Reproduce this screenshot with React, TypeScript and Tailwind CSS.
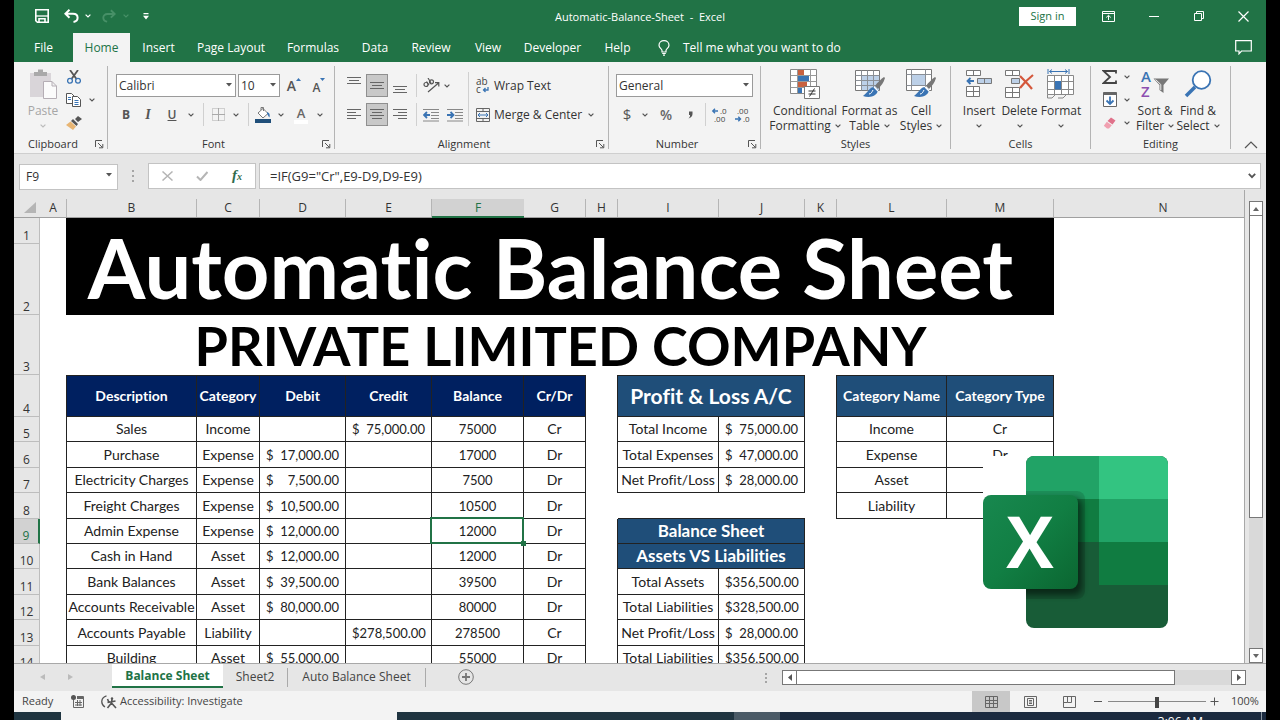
import React from "react";

type Kids = { children?: React.ReactNode };

const Chevron = ({ color = "#555" }: { color?: string }) => (
  <svg width="6" height="4" viewBox="0 0 6 4" fill="none" stroke={color} strokeWidth="1.2">
    <path d="M0.6 0.6 L3 3 L5.4 0.6" />
  </svg>
);

const Arrow = () => (
  <svg width="6" height="4" viewBox="0 0 6 4" fill="#555">
    <path d="M0 0 H6 L3 3.6 Z" />
  </svg>
);

const Tool = ({ label, className, children }: { label: string; className: string } & Kids) => (
  <button aria-label={label} className={`flex h-[23px] shrink-0 items-center justify-center ${className}`}>
    {children}
  </button>
);

const Sep = ({ className }: { className: string }) => (
  <div className={`flex h-[23px] shrink-0 justify-center ${className}`}>
    <div className="w-px bg-[#d0d0d0]" />
  </div>
);

const Launcher = () => (
  <svg width="9" height="9" viewBox="0 0 9 9" fill="none" stroke="#555">
    <path d="M0.5 7 V0.5 H7" />
    <path d="M3 3 L7.5 7.5 M7.8 4 V7.8 H4" />
  </svg>
);

const Group = ({ name, className, launcher, children }: { name: string; className: string; launcher?: boolean } & Kids) => (
  <>
    <section aria-label={name} className={`flex shrink-0 flex-col ${className}`}>
      <div className="h-[74px]">{children}</div>
      <div className="flex h-[17px] items-center text-[11px]">
        <span className="flex-1 text-center">{name}</span>
        {launcher && (
          <button aria-label={`${name} settings`} className="flex w-[15px] items-center justify-center">
            <Launcher />
          </button>
        )}
      </div>
    </section>
    <div className="mt-1 h-[83px] w-px shrink-0 bg-[#b4b4b4]" />
  </>
);

const Picker = ({ label, value, className }: { label: string; value: string; className: string }) => (
  <div className={`relative h-[23px] shrink-0 ${className}`}>
    <select aria-label={label} className="h-full w-full appearance-none border border-[#9a9a9a] bg-white pl-[2px] text-[#333]">
      <option>{value}</option>
    </select>
    <span className="pointer-events-none absolute top-[9px] right-1">
      <Arrow />
    </span>
  </div>
);

const Big = ({ lines, className, disabled, children }: { lines: string[]; className: string; disabled?: boolean } & Kids) => (
  <button disabled={disabled} className={`flex shrink-0 flex-col items-center pt-2 leading-[15px] whitespace-nowrap ${disabled ? "text-[#a6a6a6]" : ""} ${className}`}>
    <span className="mb-[5px] flex h-7 items-center">{children}</span>
    <span>{lines[0]}</span>
    <span className="flex h-[15px] items-center gap-1">
      {lines[1]}
      <Chevron color={disabled ? "#bbb" : "#555"} />
    </span>
  </button>
);

const Lines = ({ rows, y }: { rows: [number, number][]; y: number }) => (
  <svg width="14" height="22" viewBox="0 0 14 22" stroke="#666">
    {rows.map(([a, b], i) => (
      <path key={i} d={`M${a} ${y + i * 3}.5 H${b}`} />
    ))}
  </svg>
);

const Indent = ({ out }: { out?: boolean }) => (
  <svg width="16" height="14" viewBox="0 0 16 14" fill="none">
    <path d="M0 1.5 H16 M8 4.5 H16 M8 7.5 H16 M8 10.5 H16 M0 13 H16" stroke="#888" />
    <path d={out ? "M7 7 H1.5 M4 4 L1 7 L4 10" : "M0 7 H5.5 M3.5 4 L6.5 7 L3.5 10"} stroke="#3a74b4" strokeWidth="1.8" />
  </svg>
);

const Brush = () => (
  <g>
    <path d="M29 8 C26 10 22 14 20 17 L23 20 C26 17 29 13 30 9 Z" fill="#777" />
    <path d="M19 18 C15 18 13 23 8 27 C14 29 22 28 23 21 Z" fill="#3a74b4" />
    <path d="M14 25 C16 25 17 23 18 21" stroke="#fff" strokeWidth="1" fill="none" />
    <path d="M19 18 L23 22" stroke="#fff" strokeWidth="1.2" />
  </g>
);

function TitleBar() {
  return (
    <header className="flex h-8 items-center text-[11px] text-white">
      <div className="flex flex-1 items-center">
        <button aria-label="Save" className="ml-[20px] flex w-4 justify-center">
          <svg width="14" height="14" viewBox="0 0 14 14" fill="none" stroke="#fff" strokeWidth="1.6">
            <path d="M0.8 0.8 H13.2 V13.2 H2.4 L0.8 11.6 Z" />
            <path d="M0.8 7 H13.2" strokeWidth="1.3" />
            <path d="M4 13 V9.8 H10 V13" />
          </svg>
        </button>
        <button aria-label="Undo" className="ml-[13px] flex w-4 justify-center">
          <svg width="15" height="14" viewBox="0 0 15 14" fill="none" stroke="#fff" strokeWidth="2">
            <path d="M5.5 0.8 L1.4 4.8 L5.5 8.8 M2 4.8 H9 C12 4.8 13.6 6.7 13.6 8.8 C13.6 11 12 12.6 9.5 13" />
          </svg>
        </button>
        <button aria-label="Undo history" className="ml-[3px] flex w-3 justify-center">
          <Chevron color="#fff" />
        </button>
        <button aria-label="Redo" className="ml-[7px] flex w-4 justify-center opacity-30">
          <svg width="14" height="14" viewBox="0 0 15 14" fill="none" stroke="#9fd3b4" strokeWidth="2">
            <path d="M9.5 0.8 L13.6 4.8 L9.5 8.8 M13 4.8 H6 C3 4.8 1.4 6.7 1.4 8.8 C1.4 11 3 12.6 5.5 13" />
          </svg>
        </button>
        <button aria-label="Redo history" className="ml-[3px] flex w-3 justify-center opacity-30">
          <Chevron color="#9fd3b4" />
        </button>
        <button aria-label="Customize toolbar" className="ml-[8px] flex w-3 justify-center">
          <svg width="6" height="7" viewBox="0 0 6 7" fill="#fff">
            <path d="M0.5 0 H5.5 V1.2 H0.5 Z M0 2.8 H6 L3 6.4 Z" />
          </svg>
        </button>
      </div>
      <h1 className="pt-[2px] whitespace-pre">Automatic-Balance-Sheet  -  Excel</h1>
      <div className="flex flex-1 items-center justify-end">
        <button className="mr-[10px] h-[19px] w-[57px] bg-white text-[#217346]">Sign in</button>
        <button aria-label="Ribbon display" className="flex w-[45px] justify-center">
          <svg width="13" height="11" viewBox="0 0 13 11" fill="none" stroke="#fff">
            <path d="M0.5 0.5 H12.5 V10.5 H0.5 Z M0.5 2.5 H12.5 M6.5 9 V4.5 M4.2 6.5 L6.5 4.3 L8.8 6.5" />
          </svg>
        </button>
        <button aria-label="Minimize" className="flex w-[45px] justify-center">
          <span className="h-px w-[10px] bg-white" />
        </button>
        <button aria-label="Restore" className="flex w-[45px] justify-center">
          <svg width="10" height="10" viewBox="0 0 10 10" fill="none" stroke="#fff">
            <path d="M0.5 2.5 H7.5 V9.5 H0.5 Z M2.5 2.5 V0.5 H9.5 V7.5 H7.5" />
          </svg>
        </button>
        <button aria-label="Close" className="flex w-[45px] justify-center">
          <svg width="11" height="11" viewBox="0 0 11 11" stroke="#fff" strokeWidth="1.2">
            <path d="M0.5 0.5 L10.5 10.5 M10.5 0.5 L0.5 10.5" />
          </svg>
        </button>
      </div>
    </header>
  );
}

const MENU: [string, string][] = [
  ["File", "w-[59px]"],
  ["Home", "w-[57px]"],
  ["Insert", "w-[57px]"],
  ["Page Layout", "w-[88px]"],
  ["Formulas", "w-[76px]"],
  ["Data", "w-[48px]"],
  ["Review", "w-[64px]"],
  ["View", "w-[50px]"],
  ["Developer", "w-[79px]"],
  ["Help", "w-[51px]"],
];

function MenuTabs() {
  return (
    <nav className="flex h-[30px] items-end text-[12px] text-white">
      {MENU.map(([name, w]) => (
        <button key={name} className={`h-[29px] shrink-0 whitespace-nowrap ${w} ${name === "Home" ? "bg-[#f3f3f3] text-[#217346]" : ""}`}>
          {name}
        </button>
      ))}
      <button className="ml-[15px] flex h-[29px] items-center gap-[13px] whitespace-nowrap">
        <svg width="12" height="16" viewBox="0 0 12 16" fill="none" stroke="#fff" strokeWidth="1.2">
          <path d="M4 12 V10.5 C4 9 1 8 1 5.2 C1 2.6 3.2 0.7 6 0.7 C8.8 0.7 11 2.6 11 5.2 C11 8 8 9 8 10.5 V12 Z M4.2 13.5 H7.8 M5 15.2 H7" />
        </svg>
        Tell me what you want to do
      </button>
      <button aria-label="Comments" className="mr-[14px] ml-auto flex h-[29px] items-center">
        <svg width="17" height="15" viewBox="0 0 17 15" fill="none" stroke="#fff" strokeWidth="1.2">
          <path d="M0.7 0.7 H16.3 V11 H6.5 L4 13.8 V11 H0.7 Z" />
        </svg>
      </button>
    </nav>
  );
}

function Ribbon() {
  return (
    <div className="flex h-[92px] overflow-hidden border-b border-[#cfcfcf] bg-[#f3f3f3] text-[12px] text-[#333]">
      <Group name="Clipboard" className="w-[93px]" launcher>
        <div className="flex pl-[9px]">
          <Big lines={["Paste"]} className="w-10" disabled>
            <svg width="28" height="30" viewBox="0 0 28 30">
              <path d="M1 4 H22 V28 H1 Z" fill="#d9d5d9" />
              <path d="M5 7 V3 H9 V0.5 H14 V3 H18 V7 Z" fill="#a9a9a9" />
              <path d="M14.5 12.5 H23 L27.5 17 V29.5 H14.5 Z M23 12.5 V17 H27.5" fill="#fbfbfb" stroke="#b5aeb5" />
            </svg>
          </Big>
          <div className="flex flex-col pt-[3px]">
            <div className="flex">
              <Tool label="Cut" className="w-[21px]">
                <svg width="14" height="14" viewBox="0 0 14 14" fill="none">
                  <path d="M3 0 L9.5 9 M11 0 L4.5 9" stroke="#555" strokeWidth="1.8" />
                  <circle cx="3" cy="10.8" r="2.4" stroke="#3a74b4" strokeWidth="1.3" />
                  <circle cx="11" cy="10.8" r="2.4" stroke="#3a74b4" strokeWidth="1.3" />
                </svg>
              </Tool>
            </div>
            <div className="flex">
              <Tool label="Copy" className="w-[21px]">
                <svg width="15" height="14" viewBox="0 0 15 14" fill="#fff" stroke="#555">
                  <path d="M0.5 0.5 H5.5 L8.5 3.5 V10.5 H0.5 Z" />
                  <path d="M6.5 3.5 H11.5 L14.5 6.5 V13.5 H6.5 Z" />
                  <path d="M2 4.5 H5 M2 6.5 H5 M8.5 7.5 H12.5 M8.5 9.5 H12.5 M8.5 11.5 H12.5" stroke="#3a74b4" />
                </svg>
              </Tool>
              <Tool label="Copy options" className="w-[15px]">
                <Chevron />
              </Tool>
            </div>
            <Tool label="Format painter" className="w-[21px]">
              <svg width="16" height="14" viewBox="0 0 16 14">
                <path d="M12 0 L16 3 L12 6 L9 3 Z M7 3 L12 8 L10.5 10 L5 5 Z" fill="#555" />
                <path d="M4.5 5.5 L10 10.5 L7 14 L0 9 Z" fill="#e8b573" />
              </svg>
            </Tool>
          </div>
        </div>
      </Group>

      <Group name="Font" className="w-[226px]" launcher>
        <div className="flex flex-col gap-[6px] pt-3 pl-2">
          <div className="flex">
            <Picker label="Font" value="Calibri" className="mr-[2px] w-[120px]" />
            <Picker label="Font size" value="10" className="w-[42px]" />
            <Tool label="Increase font size" className="w-[28px] text-[14px] font-semibold text-[#555]">
              A
              <span className="-mt-3">
                <svg width="5" height="3" fill="#3a74b4"><path d="M0 3 H5 L2.5 0 Z" /></svg>
              </span>
            </Tool>
            <Tool label="Decrease font size" className="w-[22px] pt-1 font-semibold text-[#555]">
              A
              <span className="-mt-4">
                <svg width="5" height="3" fill="#3a74b4"><path d="M0 0 H5 L2.5 3 Z" /></svg>
              </span>
            </Tool>
          </div>
          <div className="flex">
            <Tool label="Bold" className="w-[20px] font-bold text-[#555]">B</Tool>
            <Tool label="Italic" className="w-[24px] font-['Liberation_Serif',serif] text-[14px] font-bold text-[#555] italic">I</Tool>
            <Tool label="Underline" className="w-[24px] font-semibold text-[#555] underline">U</Tool>
            <Tool label="Underline options" className="w-[14px]"><Chevron /></Tool>
            <Sep className="w-[10px]" />
            <Tool label="Borders" className="w-[20px]">
              <svg width="13" height="13" viewBox="0 0 13 13" fill="none" stroke="#aaa">
                <path d="M0.5 0.5 H12.5 V12.5 H0.5 Z" strokeDasharray="1 1" />
                <path d="M6.5 0 V13 M0 6.5 H13" />
              </svg>
            </Tool>
            <Tool label="Border options" className="w-[16px]"><Chevron /></Tool>
            <Sep className="w-2" />
            <Tool label="Fill color" className="w-[22px]">
              <svg width="16" height="16" viewBox="0 0 16 16" fill="none">
                <path d="M3 6 L8 1.5 L13 6.5 L8 11 Z" fill="#fff" stroke="#777" />
                <path d="M6 3 V0.5 H8.5 V4" stroke="#777" />
                <path d="M12 5 C15 6 15 8 14.5 10.5 C13 9 13 8 12 6.5 Z" fill="#3a74b4" />
                <path d="M0 12 H16 V16 H0 Z" fill="#1f4e79" />
              </svg>
            </Tool>
            <Tool label="Fill options" className="w-[14px]"><Chevron /></Tool>
            <Tool label="Font color" className="w-[26px]">
              <span className="border-b-4 border-white px-[3px] text-[13px] leading-[14px] font-semibold text-[#666]">A</span>
            </Tool>
            <Tool label="Font color options" className="w-3"><Chevron /></Tool>
          </div>
        </div>
      </Group>

      <Group name="Alignment" className="w-[273px]" launcher>
        <div className="flex">
          <div className="flex flex-col gap-[6px] pt-3 pl-[7px]">
            <div className="flex">
              <Tool label="Top align" className="w-6"><Lines y={2} rows={[[0, 14], [2, 12], [0, 14]]} /></Tool>
              <Tool label="Middle align" className="w-[22px] border border-[#8f8f8f] bg-[#c8c8c8]"><Lines y={7} rows={[[0, 14], [2, 12], [0, 14]]} /></Tool>
              <Tool label="Bottom align" className="w-6"><Lines y={11} rows={[[0, 14], [2, 12], [0, 14]]} /></Tool>
              <Sep className="w-2" />
              <Tool label="Orientation" className="w-[22px]">
                <svg width="17" height="15" viewBox="0 0 17 15" fill="none" stroke="#555" strokeWidth="1.2">
                  <circle cx="3" cy="6.5" r="2" />
                  <path d="M3.5 3.5 L6 7" />
                  <circle cx="8.5" cy="3.8" r="2" />
                  <path d="M5 0 L8 5" />
                  <path d="M5 14 L15.5 5 M12 4.7 H15.8 V8.5" />
                </svg>
              </Tool>
              <Tool label="Orientation options" className="w-[10px]"><Chevron /></Tool>
            </div>
            <div className="flex">
              <Tool label="Align left" className="w-6"><Lines y={5} rows={[[0, 14], [0, 9], [0, 14], [0, 9]]} /></Tool>
              <Tool label="Center" className="w-[22px] border border-[#8f8f8f] bg-[#c8c8c8]"><Lines y={5} rows={[[0, 14], [2, 12], [0, 14], [2, 12]]} /></Tool>
              <Tool label="Align right" className="w-6"><Lines y={5} rows={[[0, 14], [5, 14], [0, 14], [5, 14]]} /></Tool>
              <Sep className="w-2" />
              <Tool label="Decrease indent" className="w-[22px]"><Indent out /></Tool>
              <Tool label="Increase indent" className="w-[26px]"><Indent /></Tool>
            </div>
          </div>
          <div className="mt-[10px] h-[54px] w-px bg-[#d0d0d0]" />
          <div className="flex flex-col gap-[6px] pt-3 pl-[7px]">
            <button className="flex h-[23px] items-center gap-1 whitespace-nowrap">
              <svg className="overflow-visible" width="14" height="16" viewBox="0 0 14 16" fill="none">
                <text x="0" y="7" fontSize="10" fill="#444">ab</text>
                <text x="0" y="15" fontSize="10" fill="#444">c</text>
                <path d="M12 9 V12 H7.5 M9.5 10 L7.5 12 L9.5 14" stroke="#3a74b4" strokeWidth="1.3" />
              </svg>
              Wrap Text
            </button>
            <div className="flex">
              <button className="flex h-[23px] items-center gap-1 whitespace-nowrap">
                <svg width="14" height="14" viewBox="0 0 14 14" fill="none" stroke="#666">
                  <path d="M0.5 0.5 H13.5 V13.5 H0.5 Z M0.5 3.5 H13.5 M0.5 10.5 H13.5 M7 0.5 V3.5 M7 10.5 V13.5" />
                  <path d="M2 7 H12 M4 5 L2 7 L4 9 M10 5 L12 7 L10 9" stroke="#3a74b4" />
                </svg>
                Merge &amp; Center
              </button>
              <Tool label="Merge options" className="w-[18px]"><Chevron /></Tool>
            </div>
          </div>
        </div>
      </Group>

      <Group name="Number" className="w-[151px]" launcher>
        <div className="flex flex-col gap-[6px] pt-3 pl-[7px]">
          <Picker label="Number format" value="General" className="w-[137px]" />
          <div className="flex">
            <Tool label="Currency" className="w-[22px] text-[15px] text-[#555]">$</Tool>
            <Tool label="Currency options" className="w-[14px]"><Chevron /></Tool>
            <Tool label="Percent" className="w-[28px] text-[14px] font-semibold text-[#666]">%</Tool>
            <Tool label="Comma style" className="w-[20px]">
              <svg width="5" height="8" viewBox="0 0 5 8" fill="#555"><path d="M1 0.5 H4.5 V3 C4.5 5 3 7 0.5 7.5 C2 6 2.2 5 2 4 H1 Z" /></svg>
            </Tool>
            <Sep className="w-[10px]" />
            <Tool label="Increase decimal" className="w-[18px]">
              <svg className="overflow-visible" width="15" height="14" viewBox="0 0 15 14" fill="#444" fontSize="8">
                <text x="8" y="6">.0</text>
                <text x="2" y="14">.00</text>
                <path d="M6 3 H0.8 M3 0.8 L0.8 3 L3 5.2" fill="none" stroke="#3a74b4" strokeWidth="1.4" />
              </svg>
            </Tool>
            <Tool label="Decrease decimal" className="ml-1 w-[20px]">
              <svg className="overflow-visible" width="15" height="14" viewBox="0 0 15 14" fill="#444" fontSize="8">
                <text x="2" y="6">.00</text>
                <text x="8" y="14">.0</text>
                <path d="M0 11 H5.5 M3.3 8.8 L5.5 11 L3.3 13.2" fill="none" stroke="#3a74b4" strokeWidth="1.4" />
              </svg>
            </Tool>
          </div>
        </div>
      </Group>

      <Group name="Styles" className="w-[189px]">
        <div className="flex pl-[10px]">
          <Big lines={["Conditional", "Formatting"]} className="w-[68px]">
            <svg width="30" height="30" viewBox="0 0 30 30">
              <path d="M0.5 0.5 H26.5 V24.5 H0.5 Z" fill="#fff" stroke="#888" />
              <path d="M0.5 6.5 H26.5 M0.5 12.5 H26.5 M0.5 18.5 H26.5 M7.5 0.5 V24.5 M20.5 0.5 V24.5" stroke="#999" />
              <path d="M8 1 H14 V6 H8 Z M8 13 H17 V18 H8 Z" fill="#c8613f" />
              <path d="M8 7 H19 V12 H8 Z M8 19 H12 V24 H8 Z" fill="#3a74b4" />
              <path d="M14.5 17.5 H29.5 V29.5 H14.5 Z" fill="#fff" stroke="#777" />
              <path d="M18.5 22 H25.5 M18.5 25 H25.5 M24.5 19.5 L19.5 27.5" stroke="#333" />
            </svg>
          </Big>
          <Big lines={["Format as", "Table"]} className="w-[61px]">
            <svg width="30" height="30" viewBox="0 0 30 30">
              <path d="M0.5 1.5 H24.5 V21.5 H0.5 Z" fill="#fff" stroke="#777" />
              <path d="M6 7 H24 V21 H6 Z" fill="#bcd0e8" />
              <path d="M0.5 6.5 H24.5 M0.5 11.5 H24.5 M0.5 16.5 H24.5 M6.5 1.5 V21.5 M12.5 1.5 V21.5 M18.5 1.5 V21.5" stroke="#8a8f96" />
              <Brush />
            </svg>
          </Big>
          <Big lines={["Cell", "Styles"]} className="w-[42px]">
            <svg width="30" height="30" viewBox="0 0 30 30">
              <path d="M0.5 0.5 H25.5 V21.5 H0.5 Z" fill="#fff" stroke="#777" />
              <path d="M0.5 5.5 H25.5 M0.5 16.5 H25.5 M5.5 0.5 V21.5 M19.5 0.5 V21.5" stroke="#8a8f96" />
              <path d="M6 6 H19 V16 H6 Z" fill="#bcd0e8" />
              <Brush />
            </svg>
          </Big>
        </div>
      </Group>

      <Group name="Cells" className="w-[139px]">
        <div className="flex pl-2">
          <Big lines={["Insert"]} className="w-10">
            <svg width="26" height="28" viewBox="0 0 26 28" fill="#fff" stroke="#777">
              <path d="M0.5 0.5 H14.5 V5.5 H0.5 Z M7.5 0.5 V5.5" />
              <path d="M11.5 8.5 H25.5 V13.5 H11.5 Z M18.5 8.5 V13.5" fill="#bcd0e8" />
              <path d="M0.5 16.5 H13.5 V26.5 H0.5 Z M7.5 16.5 V26.5 M0.5 21.5 H13.5" />
              <path d="M8 11 H1.5 M4.5 8 L1.5 11 L4.5 14" fill="none" stroke="#3a74b4" strokeWidth="1.8" />
            </svg>
          </Big>
          <Big lines={["Delete"]} className="w-[41px]">
            <svg width="29" height="28" viewBox="0 0 29 28" fill="#fff" stroke="#777">
              <path d="M0.5 0.5 H14.5 V5.5 H0.5 Z M7.5 0.5 V5.5" />
              <path d="M6.5 8.5 H14.5 V13.5 H6.5 Z" fill="#bcd0e8" />
              <path d="M0.5 17.5 H14.5 V27.5 H0.5 Z M7.5 17.5 V27.5 M0.5 22.5 H14.5" />
              <path d="M15 6 C19 10 23 14 27 19 M28 5 C23 9 18 14 15 18" fill="none" stroke="#d4573b" strokeWidth="2.2" />
            </svg>
          </Big>
          <Big lines={["Format"]} className="w-[42px]">
            <svg width="28" height="30" viewBox="0 0 28 30" fill="none" stroke="#888">
              <path d="M1 0 V5 M22 0 V5 M2.5 2.5 H20.5 M5 0.5 L2.5 2.5 L5 4.5 M18 0.5 L20.5 2.5 L18 4.5" stroke="#3a74b4" />
              <path d="M0.5 6.5 H26.5 V25.5 H0.5 Z" fill="#fff" />
              <path d="M0.5 12.5 H26.5 M0.5 20.5 H26.5 M7.5 6.5 V25.5 M14.5 6.5 V25.5 M21.5 6.5 V25.5" />
              <path d="M8 12 H14 V20.5 H8 Z" fill="#3a74b4" stroke="none" />
              <path d="M0.5 25.5 V29 H5 L8 26 M11 29 H16 L19 26" />
            </svg>
          </Big>
        </div>
      </Group>

      <Group name="Editing" className="w-[139px]">
        <div className="flex pl-2">
          <div className="flex w-[34px] flex-col pt-[3px]">
            <div className="flex">
              <Tool label="Sum" className="w-[21px]">
                <svg width="15" height="14" viewBox="0 0 15 14" fill="none" stroke="#444" strokeWidth="1.8">
                  <path d="M14 3.5 V1 H1.5 L8 7 L1.5 13 H14 V10.5" />
                </svg>
              </Tool>
              <Tool label="Sum options" className="w-[13px]"><Chevron /></Tool>
            </div>
            <div className="flex">
              <Tool label="Fill" className="w-[21px]">
                <svg width="14" height="15" viewBox="0 0 14 15" fill="none">
                  <path d="M0.5 0.5 H13.5 V14.5 H0.5 Z" fill="#fff" stroke="#666" />
                  <path d="M0.5 0.5 H13.5 V3 H0.5 Z" fill="#666" />
                  <path d="M7 4.5 V12 M3.5 8.5 L7 12 L10.5 8.5" stroke="#3a74b4" strokeWidth="1.8" />
                </svg>
              </Tool>
              <Tool label="Fill options" className="w-[13px]"><Chevron /></Tool>
            </div>
            <div className="flex">
              <Tool label="Clear" className="w-[21px]">
                <svg width="13" height="12" viewBox="0 0 13 12">
                  <path d="M8 0.5 L12.5 3.5 L9.5 7.5 L4.5 4 Z" fill="#e0718a" />
                  <path d="M3.8 4.8 L8.8 8.3 L6 11.5 H4 L0.8 8.8 Z" fill="#f0a0b0" />
                </svg>
              </Tool>
              <Tool label="Clear options" className="w-[13px]"><Chevron /></Tool>
            </div>
          </div>
          <Big lines={["Sort &", "Filter"]} className="w-11">
            <svg className="overflow-visible" width="29" height="28" viewBox="0 0 29 28">
              <text x="0" y="12" fontSize="15" fontWeight="600" fill="#3a74b4">A</text>
              <text x="0" y="27" fontSize="15" fontWeight="600" fill="#8d4fb0">Z</text>
              <path d="M12.5 8.5 H28 L22.5 15 V23 L18.5 20 V15 Z" fill="#777" />
              <path d="M19.8 14.5 V20 M14.5 9.5 L19.8 14.5" stroke="#eee" />
            </svg>
          </Big>
          <Big lines={["Find &", "Select"]} className="w-[42px]">
            <svg width="28" height="28" viewBox="0 0 28 28" fill="none" stroke="#3a74b4">
              <circle cx="17.5" cy="10" r="8.8" fill="#fff" strokeWidth="1.8" />
              <path d="M11 17 L2 26" strokeWidth="3.6" />
            </svg>
          </Big>
        </div>
      </Group>
      <button aria-label="Collapse ribbon" className="mr-2 mb-[4px] ml-auto self-end">
        <svg width="14" height="9" viewBox="0 0 14 9" fill="none" stroke="#555" strokeWidth="1.2">
          <path d="M1 8 L7 2 L13 8" />
        </svg>
      </button>
    </div>
  );
}

function FormulaBar() {
  return (
    <div className="flex h-9 items-center pt-[8px] pr-[5px] pl-[5px] text-[#333]">
      <div className="relative h-[26px] w-[99px] shrink-0">
        <input aria-label="Name box" defaultValue="F9" className="h-full w-full border border-[#c3c3c3] bg-white pl-[6px] text-[12px]" />
        <span className="pointer-events-none absolute top-[10px] right-[6px]">
          <Arrow />
        </span>
      </div>
      <div className="flex w-[30px] shrink-0 flex-col items-center gap-[3px]">
        <i className="size-[2px] bg-[#a5a5a5]" />
        <i className="size-[2px] bg-[#a5a5a5]" />
        <i className="size-[2px] bg-[#a5a5a5]" />
      </div>
      <div className="flex h-[26px] w-[108px] shrink-0 items-center border border-[#c3c3c3] bg-white">
        <button aria-label="Cancel" className="flex w-9 justify-center">
          <svg width="11" height="10" viewBox="0 0 11 10" stroke="#b5b5b5" strokeWidth="1.5"><path d="M0.5 0.5 L10.5 9.5 M10.5 0.5 L0.5 9.5" /></svg>
        </button>
        <button aria-label="Enter" className="flex w-[34px] justify-center">
          <svg width="12" height="10" viewBox="0 0 12 10" fill="none" stroke="#b5b5b5" strokeWidth="2"><path d="M1 5.5 L4.5 9 L11.5 1" /></svg>
        </button>
        <button aria-label="Insert function" className="w-[36px] font-['Liberation_Serif',serif] text-[15px] leading-4 font-bold text-[#2f6b4c] italic">
          f<span className="text-[10px]">x</span>
        </button>
      </div>
      <div className="relative ml-[3px] h-[26px] flex-1">
        <input aria-label="Formula" defaultValue={'=IF(G9="Cr",E9-D9,D9-E9)'} className="h-full w-full border border-[#c3c3c3] bg-white pl-[10px] text-[13px]" />
        <span className="pointer-events-none absolute top-[10px] right-[5px]">
          <svg width="8" height="6" viewBox="0 0 8 6" fill="none" stroke="#555" strokeWidth="1.8"><path d="M0.8 0.8 L4 4.2 L7.2 0.8" /></svg>
        </span>
      </div>
    </div>
  );
}

const COLS: [string, string][] = [
  ["A", "w-[27px]"],
  ["B", "w-[130px]"],
  ["C", "w-[63px]"],
  ["D", "w-[86px]"],
  ["E", "w-[86px]"],
  ["F", "w-[92px]"],
  ["G", "w-[62px]"],
  ["H", "w-[32px]"],
  ["I", "w-[101px]"],
  ["J", "w-[86px]"],
  ["K", "w-[32px]"],
  ["L", "w-[110px]"],
  ["M", "w-[107px]"],
  ["N", ""],
];

type Entry = {
  h: string;
  main: [string, string, string, string, string, string];
  side?: [string, string];
  banner?: string;
  kind?: [string, string];
};

const ENTRIES: Entry[] = [
  { h: "h-[25px]", main: ["Sales", "Income", "", "75,000.00", "75000", "Cr"], side: ["Total Income", "75,000.00"], kind: ["Income", "Cr"] },
  { h: "h-[26px]", main: ["Purchase", "Expense", "17,000.00", "", "17000", "Dr"], side: ["Total Expenses", "47,000.00"], kind: ["Expense", "Dr"] },
  { h: "h-[25px]", main: ["Electricity Charges", "Expense", "7,500.00", "", "7500", "Dr"], side: ["Net Profit/Loss", "28,000.00"], kind: ["Asset", "Dr"] },
  { h: "h-[26px]", main: ["Freight Charges", "Expense", "10,500.00", "", "10500", "Dr"], kind: ["Liability", "Cr"] },
  { h: "h-[25px]", main: ["Admin Expense", "Expense", "12,000.00", "", "12000", "Dr"], banner: "Balance Sheet" },
  { h: "h-[25px]", main: ["Cash in Hand", "Asset", "12,000.00", "", "12000", "Dr"], banner: "Assets VS Liabilities" },
  { h: "h-[26px]", main: ["Bank Balances", "Asset", "39,500.00", "", "39500", "Dr"], side: ["Total Assets", "356,500.00"] },
  { h: "h-[25px]", main: ["Accounts Receivable", "Asset", "80,000.00", "", "80000", "Dr"], side: ["Total Liabilities", "328,500.00"] },
  { h: "h-[26px]", main: ["Accounts Payable", "Liability", "", "278,500.00", "278500", "Cr"], side: ["Net Profit/Loss", "28,000.00"] },
  { h: "h-[25px]", main: ["Building", "Asset", "55,000.00", "", "55000", "Dr"], side: ["Total Liabilities", "356,500.00"] },
];

const CELL = "border-r border-b border-[#222] p-0 text-center";
const HEAD = "border-t border-r border-b border-[#222] p-0 text-center";
const GAP = "border-r border-[#222] p-0";

const RowHead = ({ n }: { n: number }) => (
  <th
    scope="row"
    className={`border-b border-b-[#bdbdbd] p-0 align-bottom font-['Open_Sans',sans-serif] text-[12px] leading-[15px] font-normal ${
      n === 9 ? "border-r-2 border-r-[#217346] bg-[#d2d2d2] text-[#217346]" : "border-r border-r-[#bdbdbd] bg-[#e6e6e6] text-[#333]"
    }`}
  >
    {n}
  </th>
);

const Money = ({ value }: { value: string }) => (
  <td className={`${CELL} px-[6px]`}>
    {value && (
      <div className="flex justify-between text-[13px]">
        <span>$</span>
        <span>{value}</span>
      </div>
    )}
  </td>
);

function Sheet() {
  return (
    <div className="flex min-h-0 flex-1">
      <div className="relative min-w-0 flex-1 overflow-hidden border-r border-r-[#a8a8a8] bg-white">
        <table className="w-full table-fixed border-separate border-spacing-0 bg-white font-[Lato,sans-serif] text-[14px] leading-[18px] whitespace-nowrap text-[#222] [font-variant-ligatures:none]">
          <colgroup>
            <col className="w-[26px]" />
            {COLS.map(([c, w]) => (
              <col key={c} className={w} />
            ))}
          </colgroup>
          <thead>
            <tr className="h-7 bg-[#e6e6e6] font-['Open_Sans',sans-serif] text-[12px] leading-[18px] text-[#333]">
              <td className="border-b border-[#a0a0a0] p-0 align-bottom">
                <svg className="ml-[10px]" width="12" height="15" viewBox="0 0 12 15"><path d="M12 0 V11 H0 Z" fill="#b5b5b5" /></svg>
              </td>
              {COLS.map(([c]) => (
                <th
                  key={c}
                  scope="col"
                  className={`p-0 align-bottom font-normal ${c === "F" ? "border-b-2 border-[#217346]" : "border-b border-[#a0a0a0]"}`}
                >
                  <div className={c === "F" ? "bg-[#d2d2d2] leading-[17px] text-[#217346]" : c === "N" ? "pl-7" : "border-r border-[#b5b5b5]"}>{c}</div>
                </th>
              ))}
            </tr>
          </thead>
          <tbody>
            <tr className="h-[26px]">
              <RowHead n={1} />
              <td className="border-r border-black p-0" />
              <td colSpan={12} rowSpan={2} className="bg-black p-0 text-center text-[83px] leading-[90px] font-bold whitespace-pre text-white">
                {"Automatic Balance Sheet "}
              </td>
              <td />
            </tr>
            <tr className="h-[71px]">
              <RowHead n={2} />
              <td className="border-r border-black p-0" />
              <td />
            </tr>
            <tr className="h-[60px]">
              <RowHead n={3} />
              <td />
              <td colSpan={12} className="p-0 pt-[2px] text-center text-[54px] leading-[58px] font-bold text-black">
                PRIVATE LIMITED COMPANY
              </td>
              <td />
            </tr>
            <tr className="h-[42px] font-bold text-white">
              <RowHead n={4} />
              <td className={GAP} />
              {["Description", "Category", "Debit", "Credit", "Balance", "Cr/Dr"].map((t) => (
                <td key={t} className={`${HEAD} bg-[#002060]`}>{t}</td>
              ))}
              <td className={GAP} />
              <td colSpan={2} className={`${HEAD} bg-[#1f4e79] text-[21px] leading-6`}>Profit &amp; Loss A/C</td>
              <td className={GAP} />
              <td className={`${HEAD} bg-[#1f4e79]`}>Category Name</td>
              <td className={`${HEAD} bg-[#1f4e79]`}>Category Type</td>
              <td />
            </tr>
            {ENTRIES.map((e, i) => {
              const n = i + 5;
              const [desc, cat, debit, credit, bal, side] = e.main;
              const hasSide = Boolean(e.side || e.banner);
              return (
                <tr key={n} className={e.h}>
                  <RowHead n={n} />
                  <td className={GAP} />
                  <td className={CELL}>{desc}</td>
                  <td className={CELL}>{cat}</td>
                  <Money value={debit} />
                  <Money value={credit} />
                  <td className={`${CELL} text-[13px] ${n === 9 ? "relative" : ""}`}>
                    {bal}
                    {n === 9 && (
                      <>
                        <span className="absolute -top-[2px] -right-px -bottom-px -left-[2px] border-2 border-[#217346]" />
                        <span className="absolute -right-[3px] -bottom-[3px] size-[5px] bg-[#217346]" />
                      </>
                    )}
                  </td>
                  <td className={CELL}>{side}</td>
                  <td className={hasSide ? GAP : "p-0"} />
                  {e.side && (
                    <>
                      <td className={CELL}>{e.side[0]}</td>
                      <Money value={e.side[1]} />
                    </>
                  )}
                  {e.banner && (
                    <td colSpan={2} className={`${CELL} bg-[#1f4e79] text-[17px] font-bold text-white`}>{e.banner}</td>
                  )}
                  {!hasSide && <td colSpan={2} className="border-b border-[#222] p-0" />}
                  <td className={e.kind ? GAP : "p-0"} />
                  <td className={e.kind ? CELL : "p-0"}>{e.kind?.[0]}</td>
                  <td className={e.kind ? CELL : "p-0"}>{e.kind?.[1]}</td>
                  <td />
                </tr>
              );
            })}
          </tbody>
        </table>
        <div className="absolute top-[266px] left-[969px] h-[173px] w-[186px] bg-white">
          <svg width="186" height="173" viewBox="0 0 186 173" role="img" aria-label="Excel logo">
            <defs>
              <linearGradient id="tile" x1="0" y1="0" x2="1" y2="1">
                <stop offset="0" stopColor="#18884f" />
                <stop offset="0.5" stopColor="#117e43" />
                <stop offset="1" stopColor="#0b6631" />
              </linearGradient>
              <clipPath id="book">
                <rect x="43" y="0" width="142" height="172" rx="8" />
              </clipPath>
              <filter id="soft" x="-20%" y="-20%" width="140%" height="140%">
                <feGaussianBlur stdDeviation="3" />
              </filter>
            </defs>
            <g clipPath="url(#book)">
              <rect x="43" y="0" width="142" height="172" fill="#185c37" />
              <rect x="43" y="0" width="73" height="43" fill="#21a366" />
              <rect x="116" y="0" width="70" height="43" fill="#33c481" />
              <rect x="43" y="43" width="73" height="43" fill="#107c41" />
              <rect x="116" y="43" width="70" height="43" fill="#21a366" />
              <rect x="116" y="86" width="70" height="43" fill="#107c41" />
              <rect x="4" y="35" width="98" height="108" rx="8" fill="#000" opacity="0.12" />
              <rect x="2" y="42" width="97" height="97" rx="8" fill="#000" opacity="0.5" filter="url(#soft)" />
            </g>
            <rect x="0" y="39" width="95" height="94" rx="8" fill="url(#tile)" />
            <text x="47" y="112" textAnchor="middle" fontFamily="Open Sans, sans-serif" fontWeight="700" fontSize="71" fill="#fff">X</text>
          </svg>
        </div>
      </div>
      <div className="flex w-[21px] shrink-0 flex-col pt-[11px] pr-[3px] pl-[4px]">
        <button aria-label="Scroll up" className="flex h-[15px] items-center justify-center border border-[#777] bg-white">
          <svg width="6" height="4" fill="#666"><path d="M0 4 H6 L3 0 Z" /></svg>
        </button>
        <div className="flex-1 bg-[#d9d9d9]">
          <div className="h-[70%] border border-t-0 border-[#777] bg-white" />
        </div>
        <button aria-label="Scroll down" className="flex h-[15px] items-center justify-center border border-[#777] bg-white">
          <svg width="6" height="4" fill="#666"><path d="M0 0 H6 L3 4 Z" /></svg>
        </button>
      </div>
    </div>
  );
}

function SheetTabs() {
  return (
    <div className="flex h-[28px] border-t border-[#a8a8a8] text-[12px] text-[#444]">
      <div className="flex w-[98px] shrink-0 items-center pl-[26px]">
        <button aria-label="Previous sheet" className="mb-px w-7">
          <svg width="5" height="6" fill="#bbb"><path d="M5 0 V6 L0 3 Z" /></svg>
        </button>
        <button aria-label="Next sheet" className="mb-px w-4">
          <svg width="5" height="6" fill="#bbb"><path d="M0 0 V6 L5 3 Z" /></svg>
        </button>
      </div>
      <button className="h-6 w-[111px] shrink-0 border-b-2 border-[#217346] bg-white pt-[2px] font-bold text-[#217346]">Balance Sheet</button>
      <button className="h-6 w-[64px] shrink-0 pt-px">Sheet2</button>
      <div className="mt-1 h-[19px] w-px bg-[#aaa]" />
      <button className="h-6 w-[137px] shrink-0 pt-px whitespace-nowrap">Auto Balance Sheet</button>
      <div className="mt-1 h-[19px] w-px bg-[#aaa]" />
      <button aria-label="New sheet" className="ml-[32px] h-[25px]">
        <svg width="16" height="16" viewBox="0 0 16 16" fill="none" stroke="#777">
          <circle cx="8" cy="8" r="7.3" />
          <path d="M8 4 V12 M4 8 H12" strokeWidth="1.8" />
        </svg>
      </button>
      <div className="ml-auto flex h-[27px] items-center">
        <div className="mr-[15px] flex flex-col gap-[2px]">
          <i className="size-[2px] bg-[#a5a5a5]" />
          <i className="size-[2px] bg-[#a5a5a5]" />
          <i className="size-[2px] bg-[#a5a5a5]" />
        </div>
        <button aria-label="Scroll left" className="flex h-[15px] w-[15px] items-center justify-center border border-[#777] bg-white">
          <svg width="4" height="7" fill="#555"><path d="M4 0 V7 L0 3.5 Z" /></svg>
        </button>
        <div className="h-[15px] w-[434px] bg-[#d9d9d9]">
          <div className="h-full w-[87%] border border-l-0 border-[#777] bg-white" />
        </div>
        <button aria-label="Scroll right" className="mr-[20px] flex h-[15px] w-[15px] items-center justify-center border border-[#777] bg-white">
          <svg width="4" height="7" fill="#555"><path d="M0 0 V7 L4 3.5 Z" /></svg>
        </button>
      </div>
    </div>
  );
}

function StatusBar() {
  return (
    <footer className="flex h-[21px] items-center bg-[#f3f3f3] text-[11px] text-[#444]">
      <span className="w-[57px] shrink-0 pl-2">Ready</span>
      <svg width="13" height="13" viewBox="0 0 13 13" fill="none" stroke="#666">
        <path d="M2.5 4.5 V12.5 H12.5 V1.5 H6 M4 7.5 H11 M4 10 H11 M6.5 5 V11 M9 5 V11" />
        <path d="M6 3 H12.5" strokeWidth="2" />
        <circle cx="2.5" cy="2.5" r="2.5" fill="#555" stroke="none" />
      </svg>
      <button className="ml-[17px] flex items-center gap-[3px] whitespace-nowrap">
        <svg width="16" height="14" viewBox="0 0 16 14" fill="none" stroke="#555" strokeWidth="1.3">
          <path d="M5.5 0.8 C-0.5 2.5 -0.5 9.5 4 12" />
          <path d="M6.5 4 L8 7.5 M6.5 7.5 L14.5 6 M11 3.5 L10.5 8 L6.5 13 M10.5 8 L15 13" strokeWidth="1.6" />
          <circle cx="11" cy="3.5" r="1.2" fill="#555" stroke="none" />
        </svg>
        Accessibility: Investigate
      </button>
      <div className="ml-auto flex h-full items-center">
        <button aria-label="Normal view" className="flex h-full w-[38px] items-center justify-center bg-[#c8c8c8]">
          <svg width="13" height="12" viewBox="0 0 13 12" fill="none" stroke="#666"><path d="M0.5 0.5 H12.5 V11.5 H0.5 Z M4.5 0.5 V11.5 M8.5 0.5 V11.5 M0.5 4.5 H12.5 M0.5 7.5 H12.5" /></svg>
        </button>
        <button aria-label="Page layout view" className="flex h-full w-[40px] items-center justify-center">
          <svg width="13" height="12" viewBox="0 0 13 12" fill="none" stroke="#666"><path d="M0.5 0.5 H12.5 V11.5 H0.5 Z M3.5 2.5 H9.5 V9.5 H3.5 Z M5 4.5 H8 M5 6 H8 M5 7.5 H8" /></svg>
        </button>
        <button aria-label="Page break view" className="flex h-full w-[38px] items-center justify-center">
          <svg width="13" height="12" viewBox="0 0 13 12" fill="none" stroke="#666"><path d="M0.5 0.5 H12.5 V11.5 H0.5 Z M4.5 0.5 V6.5 H8.5 V0.5 M0.5 6.5 H4.5" /></svg>
        </button>
        <button aria-label="Zoom out" className="ml-[6px] flex w-[14px]">
          <span className="h-px w-[8px] bg-[#555]" />
        </button>
        <div className="relative flex h-3 w-[98px] items-center">
          <span className="h-px w-full bg-[#888]" />
          <input type="range" aria-label="Zoom" className="absolute inset-0 w-full opacity-0" />
          <span className="pointer-events-none absolute top-px left-[47px] h-[11px] w-1 bg-[#444]" />
        </div>
        <button aria-label="Zoom in" className="ml-[4px] flex w-[21px]">
          <svg width="9" height="9" stroke="#555"><path d="M4.5 0.5 V8.5 M0.5 4.5 H8.5" /></svg>
        </button>
        <span className="w-[35px]">100%</span>
      </div>
    </footer>
  );
}

function Taskbar() {
  return (
    <div className="flex h-2 overflow-hidden bg-[#1f3440] text-[12px] leading-[12px] text-white">
      <div className="ml-[47px] w-[336px] bg-[#f3f3f3]" />
      <div className="ml-[337px] w-[46px] bg-[#4a5a66]" />
      <div className="flex flex-1 justify-end bg-[#1b2a3f]">
        <span className="mr-[58px] pt-[4px]">3:06 AM</span>
        <span className="mr-1 w-px bg-[#8a96a0]" />
      </div>
    </div>
  );
}

export default function App() {
  return (
    <div className="h-screen overflow-hidden bg-black px-[14px] font-['Open_Sans',sans-serif]">
      <div className="flex h-full flex-col bg-[#e6e6e6]">
        <div className="bg-[#217346]">
          <TitleBar />
          <MenuTabs />
        </div>
        <Ribbon />
        <FormulaBar />
        <Sheet />
        <SheetTabs />
        <StatusBar />
        <Taskbar />
      </div>
    </div>
  );
}
